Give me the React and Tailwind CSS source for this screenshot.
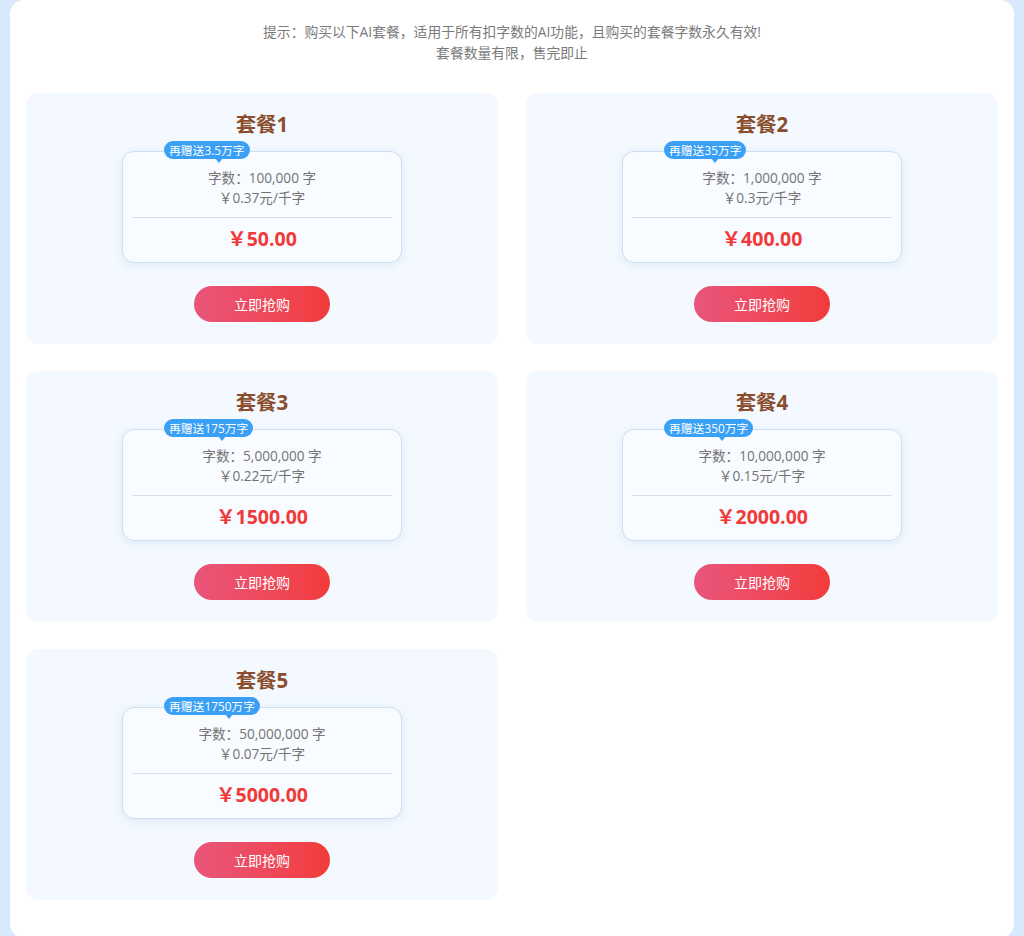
const packages = [
  { name: '套餐1', gift: '再赠送3.5万字', words: '100,000', unit: '0.37', price: '50.00' },
  { name: '套餐2', gift: '再赠送35万字', words: '1,000,000', unit: '0.3', price: '400.00' },
  { name: '套餐3', gift: '再赠送175万字', words: '5,000,000', unit: '0.22', price: '1500.00' },
  { name: '套餐4', gift: '再赠送350万字', words: '10,000,000', unit: '0.15', price: '2000.00' },
  { name: '套餐5', gift: '再赠送1750万字', words: '50,000,000', unit: '0.07', price: '5000.00' },
];

const PackageCard = ({ pkg }) => (
  <div className="bg-[#f4f9ff] rounded-xl pt-[17px] pb-[22px] flex flex-col items-center">
    <h2 className="text-[20.5px] leading-[28px] font-bold text-[#8a4e2e]">{pkg.name}</h2>

    <div className="relative mt-[13px] w-[280px] rounded-xl border border-[#cddff2] bg-[#f8fbff] shadow-[0_2px_10px_rgba(120,160,210,0.18)] px-[9px] pt-[16px] pb-[10px] text-center">
      {/* gift badge */}
      <div className="absolute left-[41px] top-[-11px] h-[18px] px-[5px] rounded-full bg-[#39a0f6] text-white text-[11.8px] leading-[18px] whitespace-nowrap">
        {pkg.gift}
        <span className="absolute right-[27px] bottom-[-4px] w-0 h-0 border-l-[4px] border-r-[4px] border-t-[5px] border-l-transparent border-r-transparent border-t-[#39a0f6]" />
      </div>

      <p className="text-[13.6px] leading-[20px] text-[#737373]">字数：{pkg.words} 字</p>
      <p className="text-[13.6px] leading-[20px] text-[#737373]">￥{pkg.unit}元/千字</p>
      <div className="mt-[9px] border-t border-[#d3dfeb]" />
      <p className="mt-[8px] text-[19.5px] leading-[26px] font-bold text-[#f03a3a]">￥{pkg.price}</p>
    </div>

    <button
      type="button"
      className="mt-[23px] w-[136px] h-[36px] rounded-full bg-gradient-to-r from-[#e9557b] to-[#f23b3a] text-white text-[14px]"
    >
      立即抢购
    </button>
  </div>
);

const App = () => {
  return (
    <div className="min-h-[936px] bg-[#d8e8fd] px-[10px] font-['Open_Sans','Noto_Sans_CJK_SC',sans-serif]">
      <div className="bg-white rounded-[14px] px-[16px] pt-[21px] pb-[38px]">
        <div className="text-center text-[13.8px] leading-[21px] text-[#7a7a7a]">
          <p>提示：购买以下AI套餐，适用于所有扣字数的AI功能，且购买的套餐字数永久有效!</p>
          <p>套餐数量有限，售完即止</p>
        </div>

        <div className="mt-[30px] grid grid-cols-2 gap-x-[28px] gap-y-[27px]">
          {packages.map((pkg) => (
            <PackageCard key={pkg.name} pkg={pkg} />
          ))}
        </div>
      </div>
    </div>
  );
};

export default App;
